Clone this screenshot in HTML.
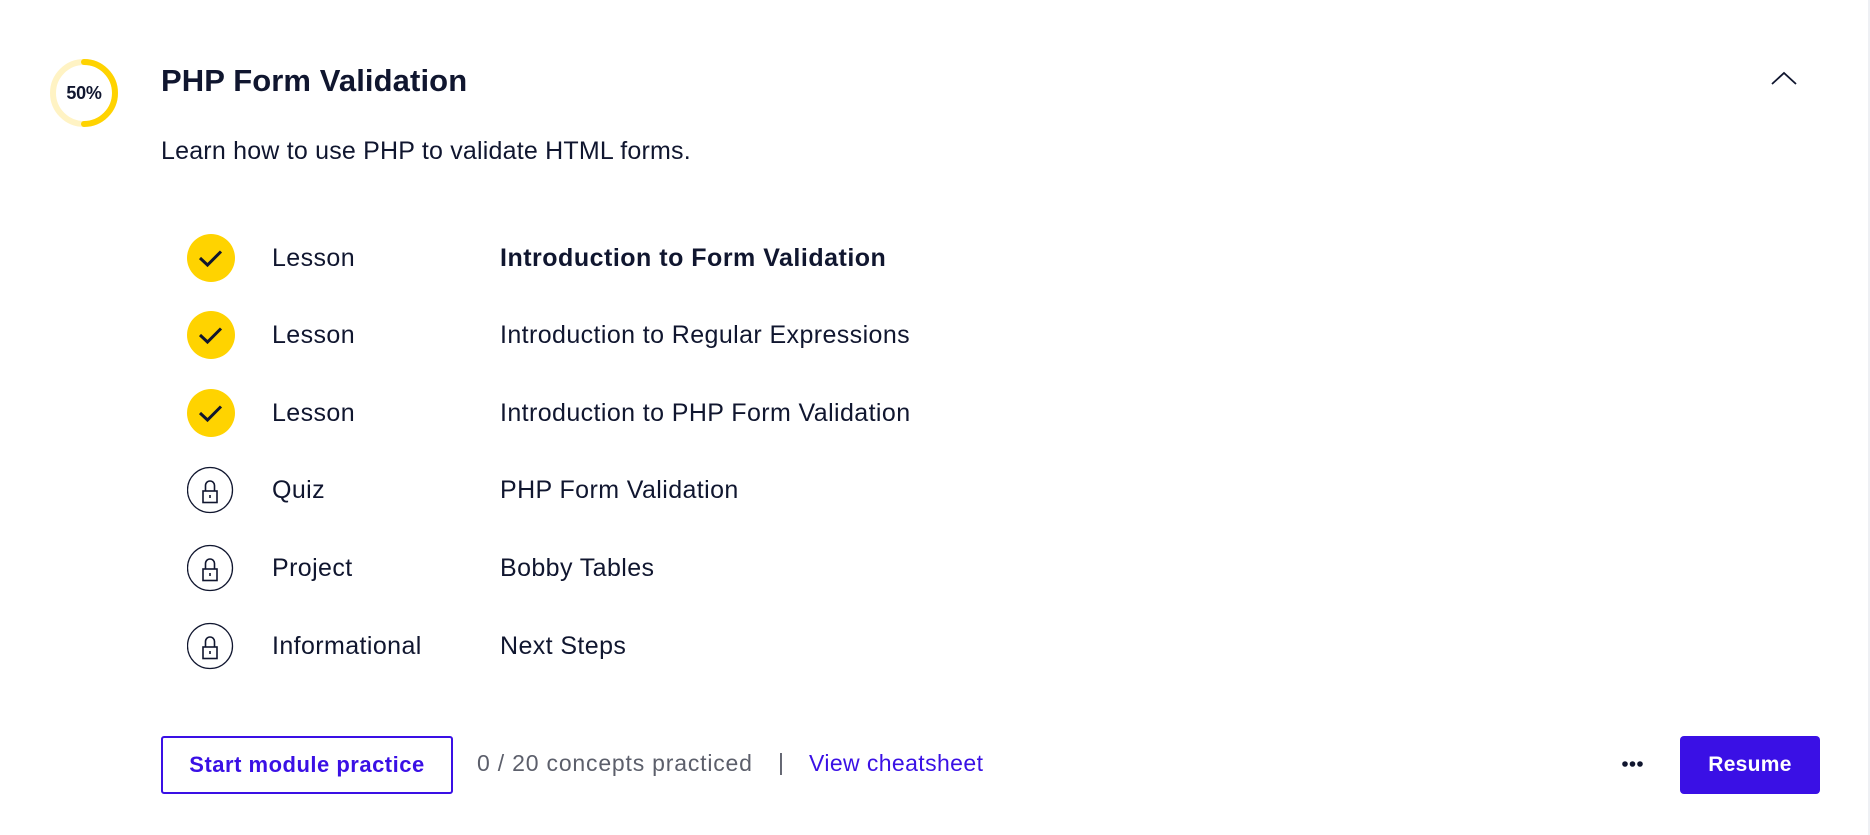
<!DOCTYPE html>
<html><head><style>
*{margin:0;padding:0;box-sizing:border-box}
body{width:1870px;height:835px;background:#fff;font-family:"Liberation Sans",sans-serif;color:#10162f;position:relative;overflow:hidden}
.abs{position:absolute}
.row{position:absolute;left:0;height:48px;width:1200px}
.row .ic{position:absolute;left:187px;top:0;width:48px;height:48px}
.row .t{position:absolute;left:272px;top:11px;font-size:25px;line-height:26px;letter-spacing:0.4px}
.row .n{position:absolute;left:500px;top:11px;font-size:25px;line-height:26px;letter-spacing:0.4px}
</style></head><body>
<div class="abs" style="right:0;top:0;width:2px;height:835px;background:#eef0f4"></div>
<svg class="abs" style="left:48px;top:57px" width="72" height="72" viewBox="0 0 72 72">
<circle cx="36" cy="36" r="31" fill="none" stroke="#fff3c4" stroke-width="6"/>
<path d="M36 5 A31 31 0 0 1 36 67" fill="none" stroke="#ffd300" stroke-width="6" stroke-linecap="round"/>
<text x="36" y="42" text-anchor="middle" font-family="Liberation Sans" font-weight="bold" font-size="18" fill="#10162f" letter-spacing="-0.3">50%</text>
</svg>
<div class="abs" style="left:161px;top:63px;font-size:31px;font-weight:bold;letter-spacing:0.1px">PHP Form Validation</div>
<svg class="abs" style="left:1770px;top:70px" width="28" height="16" viewBox="0 0 28 16"><path d="M2 14 L14 3 L26 14" fill="none" stroke="#10162f" stroke-width="1.8"/></svg>
<div class="abs" style="left:161px;top:137px;font-size:25px;letter-spacing:0.2px">Learn how to use PHP to validate HTML forms.</div>

<div class="row" style="top:234px"><svg class="ic" viewBox="0 0 48 48"><circle cx="24" cy="24" r="24" fill="#ffd300"/><path d="M13 24 L20.5 31 L34 17.5" fill="none" stroke="#10162f" stroke-width="3"/></svg><div class="t">Lesson</div><div class="n" style="font-weight:bold;letter-spacing:0.5px">Introduction to Form Validation</div></div>
<div class="row" style="top:311px"><svg class="ic" viewBox="0 0 48 48"><circle cx="24" cy="24" r="24" fill="#ffd300"/><path d="M13 24 L20.5 31 L34 17.5" fill="none" stroke="#10162f" stroke-width="3"/></svg><div class="t">Lesson</div><div class="n">Introduction to Regular Expressions</div></div>
<div class="row" style="top:389px"><svg class="ic" viewBox="0 0 48 48"><circle cx="24" cy="24" r="24" fill="#ffd300"/><path d="M13 24 L20.5 31 L34 17.5" fill="none" stroke="#10162f" stroke-width="3"/></svg><div class="t">Lesson</div><div class="n">Introduction to PHP Form Validation</div></div>
<div class="row" style="top:466px"><svg class="ic" viewBox="0 0 48 48"><circle cx="23" cy="24" r="22.5" fill="none" stroke="#10162f" stroke-width="1.3"/><path d="M18.5 25 V19.5 a4.5 4.5 0 0 1 9 0 V25" fill="none" stroke="#10162f" stroke-width="1.6"/><rect x="16" y="25" width="14" height="11.5" fill="none" stroke="#10162f" stroke-width="1.6"/><path d="M23 29 V32" stroke="#10162f" stroke-width="1.6"/></svg><div class="t">Quiz</div><div class="n">PHP Form Validation</div></div>
<div class="row" style="top:544px"><svg class="ic" viewBox="0 0 48 48"><circle cx="23" cy="24" r="22.5" fill="none" stroke="#10162f" stroke-width="1.3"/><path d="M18.5 25 V19.5 a4.5 4.5 0 0 1 9 0 V25" fill="none" stroke="#10162f" stroke-width="1.6"/><rect x="16" y="25" width="14" height="11.5" fill="none" stroke="#10162f" stroke-width="1.6"/><path d="M23 29 V32" stroke="#10162f" stroke-width="1.6"/></svg><div class="t">Project</div><div class="n">Bobby Tables</div></div>
<div class="row" style="top:622px"><svg class="ic" viewBox="0 0 48 48"><circle cx="23" cy="24" r="22.5" fill="none" stroke="#10162f" stroke-width="1.3"/><path d="M18.5 25 V19.5 a4.5 4.5 0 0 1 9 0 V25" fill="none" stroke="#10162f" stroke-width="1.6"/><rect x="16" y="25" width="14" height="11.5" fill="none" stroke="#10162f" stroke-width="1.6"/><path d="M23 29 V32" stroke="#10162f" stroke-width="1.6"/></svg><div class="t">Informational</div><div class="n">Next Steps</div></div>

<div class="abs" style="left:161px;top:736px;width:292px;height:58px;border:2px solid #3a10e5;border-radius:3px;color:#3a10e5;font-weight:bold;font-size:22px;line-height:54px;text-align:center;letter-spacing:0.5px">Start module practice</div>
<div class="abs" style="left:477px;top:750px;font-size:23px;color:#5c5f6b;letter-spacing:0.8px">0 / 20 concepts practiced</div>
<div class="abs" style="left:778px;top:749px;font-size:23px;color:#5c5f6b">|</div>
<div class="abs" style="left:809px;top:750px;font-size:23px;color:#3a10e5;letter-spacing:0.4px">View cheatsheet</div>
<svg class="abs" style="left:1621px;top:760px" width="24" height="8"><circle cx="4" cy="4" r="2.8" fill="#10162f"/><circle cx="11.5" cy="4" r="2.8" fill="#10162f"/><circle cx="19" cy="4" r="2.8" fill="#10162f"/></svg>
<div class="abs" style="left:1680px;top:736px;width:140px;height:58px;background:#3a10e5;border-radius:4px;color:#fff;font-weight:bold;font-size:21px;line-height:58px;text-align:center;letter-spacing:0.3px">Resume</div>
</body></html>
